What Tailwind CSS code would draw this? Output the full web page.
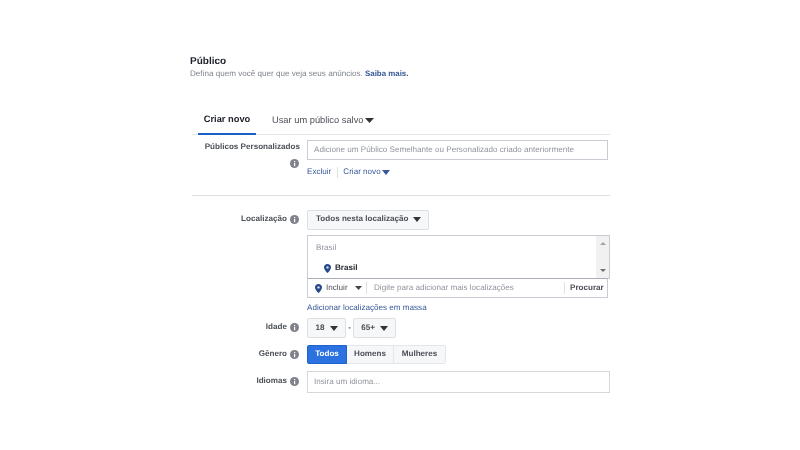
<!DOCTYPE html>
<html><head><meta charset="utf-8"><script src="https://cdn.jsdelivr.net/npm/@tailwindcss/browser@4"></script></head>
<body class="m-0 bg-white">
<div class="w-[800px] h-[450px] overflow-hidden bg-white font-['Liberation_Sans',Arial,sans-serif] text-[8.1px] [text-rendering:geometricPrecision] text-[#4b4f56] pt-[55px] pl-[190px] blur-[0.3px]">
  <div class="text-[10px] leading-[13px] font-bold text-[#1d2129]">Público</div>
  <div class="leading-[12px] text-[#7f8389]">Defina quem você quer que veja seus anúncios. <span class="text-[#365899] font-bold text-[7.9px]">Saiba mais.</span></div>

  <div class="ml-[2px] w-[418px] h-[28px] mt-[27px] flex items-stretch border-b border-[#e5e6e9] text-[9.3px]">
    <div class="ml-[6px] w-[58px] flex items-center justify-center border-b-2 border-[#1a5fc4] -mb-[1px] text-[#1d2129] font-bold">Criar novo</div>
    <div class="ml-[16px] flex items-center gap-[2px] text-[#4b4f56]">Usar um público salvo
      <svg width="9" height="5" viewBox="0 0 9 5"><path d="M0 0h9L4.5 5z" fill="#333"/></svg></div>
  </div>

  <div class="flex mt-[5px]">
    <div class="w-[109px] flex flex-col items-end pt-[1px] text-[#4b4f56] font-bold">
      <div class="leading-[12px] whitespace-nowrap mr-[-1px]">Públicos Personalizados</div>
      <svg class="mt-[6px]" width="9" height="9" viewBox="0 0 9 9"><circle cx="4.5" cy="4.5" r="4.5" fill="#7f8389"/><rect x="4" y="4" width="1.2" height="3.2" fill="#fff"/><rect x="4" y="2" width="1.2" height="1.2" fill="#fff"/></svg>
    </div>
    <div class="ml-[8px]">
      <div class="w-[301px] h-[20px] border border-[#c9ccd2] flex items-center px-[6px] text-[#90949c] whitespace-nowrap">Adicione um Público Semelhante ou Personalizado criado anteriormente</div>
      <div class="flex items-center mt-[6px] text-[#365899] h-[12px]">
        <span>Excluir</span><span class="w-px h-[11px] bg-[#dddfe2] ml-[6px] mr-[5px]"></span><span>Criar novo</span>
        <svg class="ml-[1px]" width="8" height="5" viewBox="0 0 8 5"><path d="M0 0h8L4 5z" fill="#365899"/></svg>
      </div>
    </div>
  </div>

  <div class="ml-[2px] w-[418px] h-px bg-[#dddfe2] mt-[17px]"></div>

  <div class="flex mt-[14px]">
    <div class="w-[109px] h-[20px] pb-[2px] flex items-center justify-end gap-[3px] font-bold">Localização
      <svg width="9" height="9" viewBox="0 0 9 9"><circle cx="4.5" cy="4.5" r="4.5" fill="#7f8389"/><rect x="4" y="4" width="1.2" height="3.2" fill="#fff"/><rect x="4" y="2" width="1.2" height="1.2" fill="#fff"/></svg></div>
    <div class="ml-[8px]">
      <div class="w-[122px] h-[20px] pb-px border border-[#dddfe2] bg-[#f6f7f9] rounded-[2px] flex items-center justify-between pl-[8px] pr-[7px] font-bold text-[#4b4f56] whitespace-nowrap">Todos nesta localização
        <svg width="8" height="5" viewBox="0 0 8 5"><path d="M0 0h8L4 5z" fill="#333"/></svg></div>
      <div class="w-[303px] h-[44px] mt-[5px] border border-[#c9ccd2] flex">
        <div class="flex-1 pl-[8px] pt-[6px]">
          <div class="leading-[12px] text-[#90949c]">Brasil</div>
          <div class="flex items-center mt-[8px] ml-[8px] gap-[4px] text-[#1d2129] leading-[12px] font-bold">
            <svg width="7" height="9" viewBox="0 0 7 9"><path d="M3.5 0C1.5 0 0 1.5 0 3.4 0 5.6 3.5 9 3.5 9S7 5.6 7 3.4C7 1.5 5.5 0 3.5 0z" fill="#27498c"/><circle cx="3.5" cy="3.4" r="1.2" fill="#d5dcec"/></svg>Brasil</div>
        </div>
        <div class="w-[13px] bg-[#f1f1f1] flex flex-col items-center justify-between py-[6px]">
          <svg width="6" height="3" viewBox="0 0 6 3"><path d="M0 3h6L3 0z" fill="#a3a3a3"/></svg>
          <svg width="6" height="3" viewBox="0 0 6 3"><path d="M0 0h6L3 3z" fill="#6f6f6f"/></svg>
        </div>
      </div>
      <div class="w-[301px] h-[20px] -mt-[1px] border border-[#c9ccd2] border-t-[#a9adb4] flex items-center whitespace-nowrap">
        <svg class="ml-[7px]" width="7" height="9" viewBox="0 0 7 9"><path d="M3.5 0C1.5 0 0 1.5 0 3.4 0 5.6 3.5 9 3.5 9S7 5.6 7 3.4C7 1.5 5.5 0 3.5 0z" fill="#27498c"/><circle cx="3.5" cy="3.4" r="1.2" fill="#d5dcec"/></svg>
        <span class="ml-[4px] w-[29px]">Incluir</span>
        <svg width="7" height="4" viewBox="0 0 7 4"><path d="M0 0h7L3.5 4z" fill="#444"/></svg>
        <span class="w-px h-[12px] bg-[#dddfe2] ml-[4px] mr-[7px]"></span>
        <span class="text-[#90949c] w-[190px]">Digite para adicionar mais localizações</span>
        <span class="w-px h-[12px] bg-[#dddfe2]"></span>
        <span class="ml-[5px] font-bold">Procurar</span>
      </div>
      <div class="text-[#365899] leading-[12px] mt-[4px]">Adicionar localizações em massa</div>
    </div>
  </div>

  <div class="flex mt-[4px] h-[20px] items-stretch">
    <div class="w-[109px] pb-[2px] flex items-center justify-end gap-[3px] font-bold">Idade
      <svg width="9" height="9" viewBox="0 0 9 9"><circle cx="4.5" cy="4.5" r="4.5" fill="#7f8389"/><rect x="4" y="4" width="1.2" height="3.2" fill="#fff"/><rect x="4" y="2" width="1.2" height="1.2" fill="#fff"/></svg></div>
    <div class="ml-[8px] flex items-center">
      <div class="w-[39px] h-[20px] border border-[#dddfe2] bg-[#f6f7f9] rounded-[2px] flex items-center justify-center gap-[5px] font-bold">18
        <svg width="8" height="5" viewBox="0 0 8 5"><path d="M0 0h8L4 5z" fill="#333"/></svg></div>
      <span class="w-[7px] text-center font-bold">-</span>
      <div class="w-[43px] h-[20px] border border-[#dddfe2] bg-[#f6f7f9] rounded-[2px] flex items-center justify-center gap-[5px] font-bold">65+
        <svg width="8" height="5" viewBox="0 0 8 5"><path d="M0 0h8L4 5z" fill="#333"/></svg></div>
    </div>
  </div>

  <div class="flex mt-[7px] h-[19px] items-stretch">
    <div class="w-[109px] pb-px flex items-center justify-end gap-[3px] font-bold">Gênero
      <svg width="9" height="9" viewBox="0 0 9 9"><circle cx="4.5" cy="4.5" r="4.5" fill="#7f8389"/><rect x="4" y="4" width="1.2" height="3.2" fill="#fff"/><rect x="4" y="2" width="1.2" height="1.2" fill="#fff"/></svg></div>
    <div class="ml-[8px] flex font-bold">
      <div class="w-[40px] bg-[#2b72e0] border border-[#1f64cc] rounded-l-[2px] text-white flex items-center justify-center">Todos</div>
      <div class="w-[47px] bg-[#f6f7f9] border border-[#e4e6ea] border-l-0 flex items-center justify-center">Homens</div>
      <div class="w-[52px] bg-[#f6f7f9] border border-[#e4e6ea] border-l-0 rounded-r-[2px] flex items-center justify-center">Mulheres</div>
    </div>
  </div>

  <div class="flex mt-[7px] h-[22px] items-stretch">
    <div class="w-[109px] pb-[2px] flex items-center justify-end gap-[3px] font-bold">Idiomas
      <svg width="9" height="9" viewBox="0 0 9 9"><circle cx="4.5" cy="4.5" r="4.5" fill="#7f8389"/><rect x="4" y="4" width="1.2" height="3.2" fill="#fff"/><rect x="4" y="2" width="1.2" height="1.2" fill="#fff"/></svg></div>
    <div class="ml-[8px] w-[303px] border border-[#d5d7db] flex items-center px-[6px] text-[#90949c]">Insira um idioma...</div>
  </div>
</div>
</body></html>
